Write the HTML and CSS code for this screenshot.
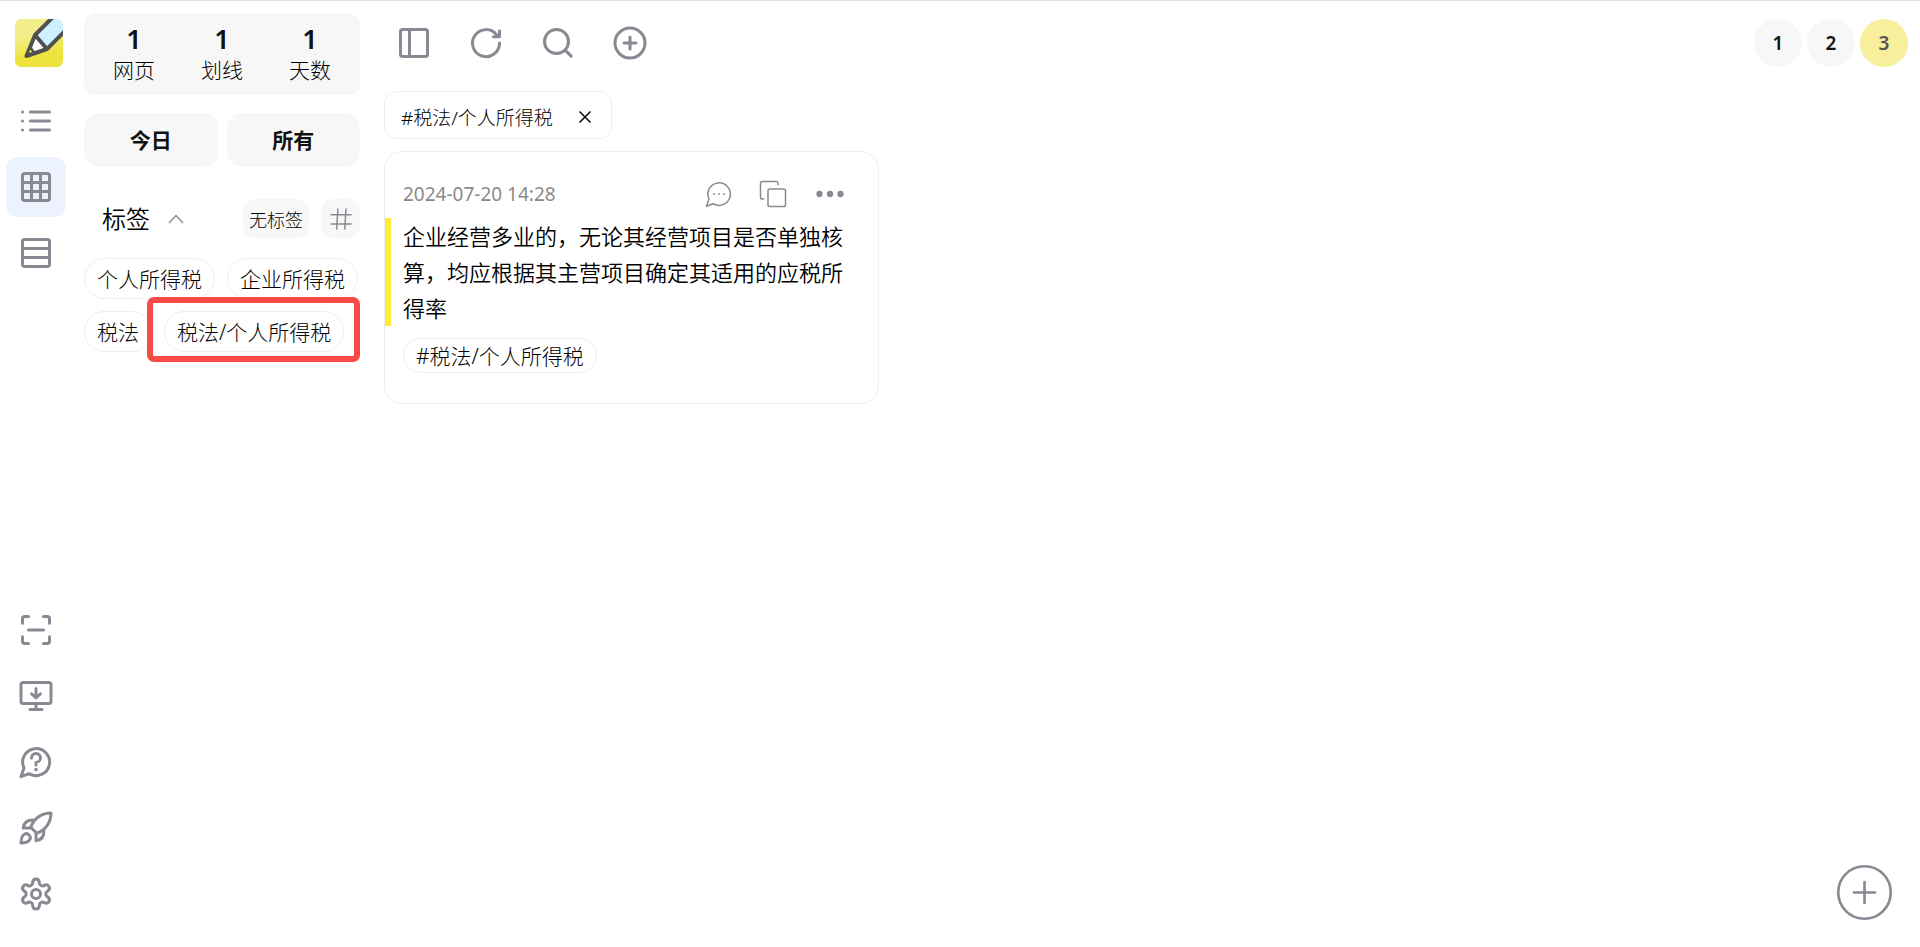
FILE: index.html
```html
<!DOCTYPE html>
<html lang="zh-CN">
<head>
<meta charset="utf-8">
<title>划线</title>
<link rel="stylesheet" href="styles.css">
</head>
<body>
<div class="app">
  <nav class="rail" aria-label="导航">
    <svg class="logo" viewBox="0 0 48 48" aria-hidden="true">
      <defs>
        <linearGradient id="sun" x1="0.4" y1="0" x2="0.6" y2="1"><stop offset="0.3" stop-color="#f4ee8c"/><stop offset="0.75" stop-color="#eee33c"/></linearGradient>
        <clipPath id="tile"><rect width="48" height="48" rx="6"/></clipPath>
      </defs>
      <g clip-path="url(#tile)">
        <rect width="48" height="48" fill="url(#sun)"/>
        <path d="M20 16L40-4L56 6L32 30Z" fill="#cdf2ff"/>
        <path d="M20 16L32 30L20 33L15 28Z" fill="#fff"/>
        <path d="M40-4L20 16L32 30L56 6M20 16L11.500 37L32 30" fill="none" stroke="#505050" stroke-width="4" stroke-linejoin="round"/>
        <path d="M15 26L21 34L10 38Z" fill="#505050"/>
        <circle cx="15.500" cy="32.500" r="1.200" fill="#eee33c"/>
      </g>
    </svg>
    <button class="icon-btn" aria-label="列表"><svg class="icon" viewBox="0 0 48 48"><path d="M16.500 12H42M16.500 24H42M16.500 36H42M6 12h.01M6 24h.01M6 36h.01"/></svg></button>
    <button class="icon-btn is-active" aria-label="卡片"><svg class="icon" viewBox="0 0 48 48"><rect x="6" y="6" width="36" height="36" rx="3"/><path d="M18 6V42M30 6V42M6 18H42M6 30H42"/></svg></button>
    <button class="icon-btn" aria-label="行"><svg class="icon" viewBox="0 0 48 48"><rect x="6" y="6" width="36" height="36" rx="3"/><path d="M6 18H42M6 30H42"/></svg></button>
    <div class="rail-bottom">
      <button class="icon-btn" aria-label="扫描"><svg class="icon" viewBox="0 0 48 48"><path d="M6 15V9a3 3 0 0 1 3-3h5M34 6h5a3 3 0 0 1 3 3v6M42 33v6a3 3 0 0 1-3 3h-5M14 42H9a3 3 0 0 1-3-3v-6M14 24H34"/></svg></button>
      <button class="icon-btn" aria-label="下载"><svg class="icon" viewBox="0 0 48 48"><rect x="4" y="6" width="40" height="28" rx="3"/><path d="M24 34V42M16 42H32M24 14V26M18 21L24 26.500L30 21"/></svg></button>
      <button class="icon-btn" aria-label="帮助"><svg class="icon" viewBox="0 0 48 48"><path d="M8 32A18 18 0 1 1 15 39.600L4 43.500Z"/><path d="M18 18.500A6 6 0 1 1 24 24.500V28"/><circle class="solid" cx="24" cy="34" r="2.400"/></svg></button>
      <button class="icon-btn" aria-label="升级"><svg class="icon" viewBox="0 0 48 48"><path d="M44 4C32 4 21 11 17 23L25 31C37 27 44 16 44 4Z"/><path d="M17 24H7C8 17 12 13 21 13.500M24 31V41C31 40 35 36 34.500 27"/><path d="M4 44C4 38 5 34 9 32C13 30 18 35 16 39C14 43 10 44 4 44Z"/></svg></button>
      <button class="icon-btn" aria-label="设置"><svg class="icon" viewBox="0 0 48 48"><defs><path id="tooth" d="M-4.500-14.500C-4.500-18-3.500-20 0-20S4.500-18 4.500-14.500C4.500-11.800 7.970-9.800 10.310-11.150"/></defs><g transform="translate(24 24)"><use href="#tooth"/><use href="#tooth" transform="rotate(60)"/><use href="#tooth" transform="rotate(120)"/><use href="#tooth" transform="rotate(180)"/><use href="#tooth" transform="rotate(240)"/><use href="#tooth" transform="rotate(300)"/><circle r="6"/></g></svg></button>
    </div>
  </nav>

  <aside class="sidebar">
    <dl class="stats">
      <div class="stat"><dd>1</dd><dt>网页</dt></div>
      <div class="stat"><dd>1</dd><dt>划线</dt></div>
      <div class="stat"><dd>1</dd><dt>天数</dt></div>
    </dl>
    <div class="filters">
      <button class="filter">今日</button>
      <button class="filter">所有</button>
    </div>
    <div class="tags-head">
      <button class="tags-title">标签<svg class="caret" viewBox="0 0 18 18"><path d="M2 13L9 5.500L16 13"/></svg></button>
      <button class="small-btn">无标签</button>
      <button class="small-btn hash" aria-label="标签管理"><svg class="icon icon-thin" viewBox="0 0 48 48"><path d="M8 17H40M8 32H40M19 8L17 40M32 8L30 40"/></svg></button>
    </div>
    <div class="tags">
      <button class="tag">个人所得税</button>
      <button class="tag">企业所得税</button>
      <button class="tag">税法</button>
      <span class="marked"><button class="tag">税法/个人所得税</button></span>
    </div>
  </aside>

  <main class="main">
    <header class="topbar">
      <div class="tools">
        <button class="tool" aria-label="侧栏"><svg class="icon" viewBox="0 0 48 48"><rect x="6" y="6" width="36" height="36" rx="3"/><path d="M18 6V42"/></svg></button>
        <button class="tool" aria-label="刷新"><svg class="icon" viewBox="0 0 48 48"><path d="M42 24A18 18 0 1 1 38.500 13.500L40 15.500M42 7.500V15.500H34"/></svg></button>
        <button class="tool" aria-label="搜索"><svg class="icon" viewBox="0 0 48 48"><circle cx="22" cy="22" r="16"/><path d="M33.500 33.500L41.500 41.500"/></svg></button>
        <button class="tool" aria-label="新增"><svg class="icon" viewBox="0 0 48 48"><circle cx="24" cy="24" r="20"/><path d="M24 16V32M16 24H32"/></svg></button>
      </div>
      <div class="pages">
        <button class="page">1</button>
        <button class="page">2</button>
        <button class="page is-current">3</button>
      </div>
    </header>

    <div class="chip">#税法/个人所得税<button class="chip-close" aria-label="移除"><svg viewBox="0 0 16 16"><path d="M2.500 2.500L13.500 13.500M13.500 2.500L2.500 13.500"/></svg></button></div>

    <article class="card">
      <div class="card-head">
        <time datetime="2024-07-20T14:28">2024-07-20 14:28</time>
        <div class="card-actions">
          <button class="tool" aria-label="评论"><svg class="icon icon-thin" viewBox="0 0 48 48"><path d="M8 32A18 18 0 1 1 15 39.600L4 43.500Z"/><g class="solid"><circle cx="16" cy="24" r="1.500"/><circle cx="24" cy="24" r="1.500"/><circle cx="32" cy="24" r="1.500"/></g></svg></button>
          <button class="tool" aria-label="复制"><svg class="icon icon-thin" viewBox="0 0 48 48"><rect x="16" y="16" width="28" height="28" rx="3"/><path d="M32 9V7a3 3 0 0 0-3-3H7a3 3 0 0 0-3 3v22a3 3 0 0 0 3 3h2"/></svg></button>
          <button class="tool" aria-label="更多"><svg class="icon" viewBox="0 0 48 48"><g class="solid"><circle cx="10" cy="24" r="4.200"/><circle cx="24" cy="24" r="4.200"/><circle cx="38" cy="24" r="4.200"/></g></svg></button>
        </div>
      </div>
      <blockquote class="quote">企业经营多业的，无论其经营项目是否单独核算，均应根据其主营项目确定其适用的应税所得率</blockquote>
      <button class="tag card-tag">#税法/个人所得税</button>
    </article>
  </main>
</div>
<button class="fab" aria-label="添加"><svg viewBox="0 0 48 48"><circle cx="24" cy="24" r="20"/><path d="M24 16V32M16 24H32"/></svg></button>
</body>
</html>
```
FILE: styles.css
```css
* { box-sizing: border-box; }

body {
  margin: 0;
  background: #fff;
  color: #000;
  font-family: "Noto Sans", "Noto Sans CJK SC", sans-serif;
  font-weight: 300;
}

button {
  margin: 0;
  padding: 0;
  border: 0;
  background: none;
  color: inherit;
  font: inherit;
  cursor: pointer;
}

.app {
  display: flex;
  min-height: 100vh;
  border-top: 1px solid #e0e0e0;
}

.icon {
  display: block;
  width: 36px;
  height: 36px;
  fill: none;
  stroke: #8a8993;
  stroke-width: 4;
  stroke-linecap: round;
  stroke-linejoin: round;
}
.icon-thin { width: 30px; height: 30px; stroke-width: 2.4; }
.solid { fill: #8a8993; stroke: none; }

/* Icon rail */
.rail {
  display: flex;
  flex-direction: column;
  gap: 6px;
  width: 72px;
  padding: 18px 6px 23px;
}
.logo {
  width: 48px;
  height: 48px;
  margin: 0 0 18px 9px;
}
.icon-btn {
  display: grid;
  place-items: center;
  width: 60px;
  height: 60px;
  border-radius: 12px;
}
.icon-btn.is-active { background: #ecf3ff; }
.rail-bottom {
  display: flex;
  flex-direction: column;
  gap: 6px;
  margin-top: auto;
}

/* Sidebar */
.sidebar {
  width: 276px;
  margin-left: 12px;
  padding-top: 12px;
  flex: none;
}
.stats {
  display: flex;
  justify-content: space-around;
  margin: 0;
  padding: 10px 6px;
  border-radius: 12px;
  background: #f7f7f7;
}
.stat {
  display: flex;
  flex-direction: column;
  align-items: center;
}
.stat dd {
  margin: 0;
  color: #111;
  font-size: 27px;
  font-weight: 600;
  line-height: 32px;
}
.stat dt { font-size: 21px; line-height: 30px; }
.filters {
  display: grid;
  grid-template-columns: 1fr 1fr;
  gap: 9px;
  margin-top: 18px;
}
.filter {
  height: 54px;
  padding-bottom: 2px;
  border-radius: 15px;
  background: #f7f7f7;
  color: #111;
  font-size: 21px;
  font-weight: 700;
}
.tags-head {
  display: flex;
  align-items: center;
  gap: 12px;
  margin-top: 32px;
}
.tags-title {
  display: flex;
  align-items: center;
  gap: 17px;
  margin-right: auto;
  padding-left: 18px;
  font-size: 24px;
  line-height: 36px;
  font-weight: 350;
}
.caret {
  width: 18px;
  height: 18px;
  fill: none;
  stroke: #8a8993;
  stroke-width: 1.4;
}
.small-btn {
  height: 39px;
  padding: 0 6px;
  border-radius: 12px;
  background: #f7f7f7;
  font-size: 18px;
}
.small-btn.hash {
  display: grid;
  place-items: center;
  width: 39px;
  padding: 0;
}
.tags {
  display: flex;
  flex-wrap: wrap;
  gap: 12px;
  margin-top: 20px;
}
.tag {
  height: 41px;
  padding: 0 12px 2px;
  border: 1px solid #eee;
  border-radius: 21px;
  font-size: 21px;
  white-space: nowrap;
}
.marked { position: relative; display: flex; }
.marked::after {
  content: "";
  position: absolute;
  inset: -14px -16px -10px -17px;
  border: 6px solid #f84b47;
  border-radius: 7px;
  pointer-events: none;
}

/* Main column */
.main {
  flex: 1;
  min-width: 0;
  padding: 18px 12px 24px 24px;
}
.topbar {
  display: flex;
  justify-content: space-between;
  align-items: center;
}
.tools {
  display: flex;
  gap: 36px;
  padding-left: 12px;
}
.pages { display: flex; gap: 5px; }
.page {
  width: 48px;
  height: 48px;
  border-radius: 50%;
  background: #f7f7f7;
  color: #111;
  font-size: 19px;
  font-weight: 600;
}
.page.is-current { background: #f8ef9c; color: #555; }
.chip {
  display: flex;
  align-items: center;
  gap: 24px;
  width: fit-content;
  height: 48px;
  margin-top: 24px;
  padding: 4px 18px 0 16px;
  border: 1px solid #eee;
  border-radius: 12px;
  font-size: 19px;
}
.chip-close svg {
  display: block;
  width: 16px;
  height: 16px;
  fill: none;
  stroke: #111;
  stroke-width: 1.6;
}

.card {
  max-width: 495px;
  margin-top: 12px;
  padding: 24px 0 30px;
  border: 1px solid #eee;
  border-radius: 18px;
}
.card-head {
  display: flex;
  justify-content: space-between;
  align-items: center;
  padding: 0 30px 0 18px;
  color: #8a8a8a;
  font-size: 19px;
}
.card-head time { font-weight: 400; }
.card-actions {
  display: flex;
  align-items: center;
  gap: 24px;
}
.quote {
  margin: 6px 0 12px;
  padding: 0 18px 0 12px;
  border-left: 6px solid #ffeb3b;
  font-size: 22px;
  font-weight: 350;
  line-height: 36px;
}
.card-tag {
  display: block;
  height: 35px;
  margin-left: 18px;
}

.fab {
  position: fixed;
  right: 24px;
  bottom: 23px;
}
.fab svg {
  display: block;
  width: 63px;
  height: 63px;
  fill: none;
  stroke: #8a8993;
  stroke-width: 2;
  stroke-linecap: round;
}
```
